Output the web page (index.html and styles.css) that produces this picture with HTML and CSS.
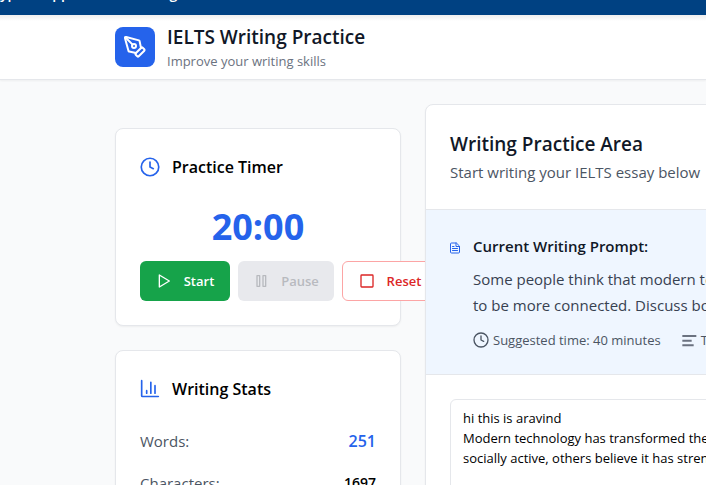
FILE: index.html
```html
<!DOCTYPE html>
<html lang="en">
<head>
<meta charset="utf-8">
<meta name="viewport" content="width=device-width, initial-scale=1">
<title>IELTS Writing Practice</title>
<link rel="stylesheet" href="styles.css">
</head>
<body>
<div class="topbar"><span>yp</span><span>app</span><span class="topbar-end">writing</span></div>
<header class="header">
  <span class="logo">
    <svg class="icon icon-logo" viewBox="0 0 24 24"><path d="M15.7 21.3a1 1 0 0 1-1.4 0l-1.6-1.6a1 1 0 0 1 0-1.4l5.6-5.6a1 1 0 0 1 1.4 0l1.6 1.6a1 1 0 0 1 0 1.4z"/><path d="m18 13-1.4-6.9a1 1 0 0 0-.7-.7L3.2 2a1 1 0 0 0-1.2 1.2l3.5 12.7a1 1 0 0 0 .7.7L13 18"/><path d="m2.3 2.3 7.3 7.3"/><circle cx="11" cy="11" r="2"/></svg>
  </span>
  <div>
    <h1 class="title">IELTS Writing Practice</h1>
    <p class="tagline">Improve your writing skills</p>
  </div>
</header>
<div class="layout">
  <aside class="sidebar">
    <section class="card">
      <h2 class="card-title"><svg class="icon icon-md" viewBox="0 0 24 24"><circle cx="12" cy="12" r="10.5"/><path d="M12 6v6l4 2"/></svg>Practice Timer</h2>
      <p class="clock">20:00</p>
      <div class="actions">
        <button class="btn btn-start" type="button"><svg class="icon icon-sm" viewBox="0 0 24 24"><path d="M5 3l15 9-15 9z"/></svg>Start</button>
        <button class="btn btn-pause" type="button" disabled><svg class="icon icon-sm" viewBox="0 0 24 24"><rect x="6" y="4" width="4" height="16"/><rect x="15" y="4" width="4" height="16"/></svg>Pause</button>
        <button class="btn btn-reset" type="button"><svg class="icon icon-sm" viewBox="0 0 24 24"><rect x="3" y="3" width="18" height="18" rx="1"/></svg>Reset</button>
      </div>
    </section>
    <section class="card">
      <h2 class="card-title"><svg class="icon icon-md" viewBox="0 0 24 24"><path d="M2 2v18a1 1 0 0 0 1 1h19M8 14v3M13 4v13M18 8v9"/></svg>Writing Stats</h2>
      <dl class="stats">
        <div class="stat"><dt>Words:</dt><dd class="words">251</dd></div>
        <div class="stat"><dt>Characters:</dt><dd>1697</dd></div>
      </dl>
    </section>
  </aside>
  <main class="panel">
    <div class="panel-head">
      <h2 class="panel-title">Writing Practice Area</h2>
      <p class="panel-sub">Start writing your IELTS essay below</p>
    </div>
    <section class="prompt">
      <svg class="icon icon-doc" viewBox="0 0 24 24"><path d="M14 2H5a2 2 0 0 0-2 2v16a2 2 0 0 0 2 2h14a2 2 0 0 0 2-2V9zM14 2v7h7M7 9h3M7 13h10M7 17h10"/></svg>
      <div>
        <h3 class="prompt-title">Current Writing Prompt:</h3>
        <p class="prompt-text">Some people think that modern technology<br>to be more connected. Discuss both views.</p>
        <div class="meta">
          <span class="meta-item"><svg class="icon icon-sm" viewBox="0 0 24 24"><circle cx="12" cy="12" r="10.5"/><path d="M12 6v6l4 2"/></svg>Suggested time: 40 minutes</span>
          <span class="meta-item"><svg class="icon icon-sm icon-lines" viewBox="0 0 24 24"><path d="M2 6h21M2 13h14M2 20h17"/></svg>Target</span>
        </div>
      </div>
    </section>
    <div class="editor">
      <textarea class="essay" aria-label="Your essay" wrap="off">hi this is aravind
Modern technology has transformed the way
socially active, others believe it has strengthened</textarea>
    </div>
  </main>
</div>
</body>
</html>
```
FILE: styles.css
```css
* { box-sizing: border-box; }
html { overflow: hidden; }
body {
  margin: 0;
  background: #f9fafb;
  color: #000;
  font-family: "Segoe UI", "Open Sans", "Noto Sans", sans-serif;
  font-size: 15px;
}
h1, h2, h3, p, dl, dd { margin: 0; }
h1, h2, h3, dd { font-weight: 600; }
.icon { fill: none; stroke: currentColor; stroke-width: 2; stroke-linecap: round; stroke-linejoin: round; flex: none; }
.icon-logo { width: 24px; height: 24px; }
.icon-md { width: 20px; height: 20px; color: #2563eb; }
.icon-sm { width: 16px; height: 16px; }
.icon-lines { color: #6b7280; stroke-width: 3; stroke-linecap: butt; }
.icon-doc { width: 12px; height: 12px; margin-top: 8px; color: #2563eb; }

.topbar {
  display: flex;
  align-items: flex-end;
  gap: 28px;
  height: 15px;
  padding-bottom: 12px;
  overflow: hidden;
  background: #004182;
  color: #fff;
  font-size: 14px;
  font-weight: 600;
}
.topbar-end { margin-left: 32px; }
.header {
  display: flex;
  align-items: center;
  gap: 12px;
  height: 65px;
  padding-left: 115px;
  background: linear-gradient(#eee, #fff 6px);
  border-bottom: 1px solid #e5e7eb;
  box-shadow: 0 1px 2px rgba(0, 0, 0, .05);
}
.logo {
  display: grid;
  place-items: center;
  width: 40px;
  height: 40px;
  border-radius: 8px;
  background: #2563eb;
  color: #fff;
}
.title { color: #111827; font-size: 19px; line-height: 28px; }
.tagline { color: #6b7280; font-size: 13px; line-height: 20px; }

.layout {
  display: grid;
  grid-template-columns: 286px minmax(840px, 1fr);
  gap: 24px;
  padding: 24px 115px;
}
.sidebar { display: grid; grid-template-columns: minmax(0, 1fr); gap: 24px; align-content: start; padding-top: 24px; }
.card, .panel {
  background: #fff;
  border: 1px solid #e5e7eb;
  border-radius: 8px;
  box-shadow: 0 1px 2px rgba(0, 0, 0, .05);
}
.card { padding: 24px; }
.card-title { display: flex; align-items: center; gap: 12px; font-size: 16px; line-height: 28px; }
.clock { margin-top: 26px; color: #2563eb; font-size: 36px; font-weight: 700; line-height: 40px; text-align: center; }
.actions { display: flex; gap: 8px; margin-top: 14px; }
.btn {
  display: flex;
  flex: none;
  align-items: center;
  justify-content: center;
  gap: 12px;
  width: 96px;
  height: 40px;
  padding: 0;
  border: 0;
  border-radius: 6px;
  font: 600 13px "Segoe UI", "Open Sans", "Noto Sans", sans-serif;
}
.btn-start { width: 90px; background: #16a34a; color: #fff; }
.btn-pause { background: #e8e9ed; color: #b8babf; }
.btn-reset { background: #fff; border: 1px solid #fca5a5; color: #dc2626; }
.stats { display: grid; gap: 14px; margin-top: 24px; }
.stat { display: flex; justify-content: space-between; line-height: 28px; }
.stat dt { color: #4b5563; }
.stat dd { font-size: 14px; }
.stat .words { color: #2563eb; font-size: 16px; }

.panel { position: relative; overflow: hidden; }
.panel-head { padding: 24px; border-bottom: 1px solid #e5e7eb; }
.panel-title { color: #111827; font-size: 19px; line-height: 30px; }
.panel-sub { color: #4b5563; line-height: 26px; }
.prompt { display: flex; gap: 12px; padding: 24px 24px 24px 23px; background: #eff6ff; border-bottom: 1px solid #e5e7eb; }
.prompt-title { color: #111827; font-size: 15px; line-height: 24px; }
.prompt-text { margin-top: 8px; color: #374151; line-height: 26px; }
.meta { display: flex; gap: 20px; margin-top: 12px; color: #4b5563; font-size: 13px; line-height: 20px; }
.meta-item { display: flex; align-items: center; gap: 4px; }
.editor { padding: 24px; }
.essay {
  display: block;
  width: 100%;
  height: 300px;
  padding: 8px 12px;
  border: 1px solid #e5e7eb;
  border-radius: 6px;
  resize: none;
  overflow: hidden;
  color: #000;
  font: 13px/20px "Segoe UI", "Open Sans", "Noto Sans", sans-serif;
}
```
